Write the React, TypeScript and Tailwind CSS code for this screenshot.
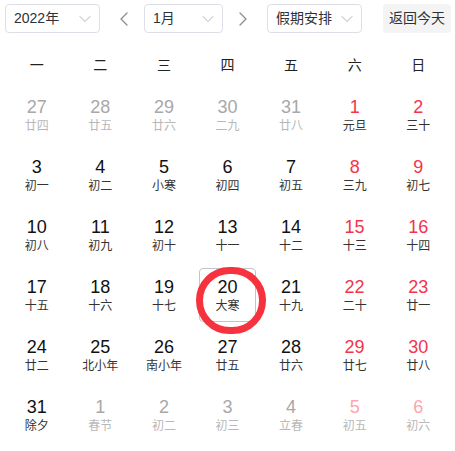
import { ChevronDown, ChevronLeft, ChevronRight } from "lucide-react";

type Day = {
  day: number;
  lunar: string;
  kind: "prev" | "cur" | "next";
};

const weekNames = ["一", "二", "三", "四", "五", "六", "日"];

const days: Day[] = [
  { day: 27, lunar: "廿四", kind: "prev" },
  { day: 28, lunar: "廿五", kind: "prev" },
  { day: 29, lunar: "廿六", kind: "prev" },
  { day: 30, lunar: "二九", kind: "prev" },
  { day: 31, lunar: "廿八", kind: "prev" },
  { day: 1, lunar: "元旦", kind: "cur" },
  { day: 2, lunar: "三十", kind: "cur" },
  { day: 3, lunar: "初一", kind: "cur" },
  { day: 4, lunar: "初二", kind: "cur" },
  { day: 5, lunar: "小寒", kind: "cur" },
  { day: 6, lunar: "初四", kind: "cur" },
  { day: 7, lunar: "初五", kind: "cur" },
  { day: 8, lunar: "三九", kind: "cur" },
  { day: 9, lunar: "初七", kind: "cur" },
  { day: 10, lunar: "初八", kind: "cur" },
  { day: 11, lunar: "初九", kind: "cur" },
  { day: 12, lunar: "初十", kind: "cur" },
  { day: 13, lunar: "十一", kind: "cur" },
  { day: 14, lunar: "十二", kind: "cur" },
  { day: 15, lunar: "十三", kind: "cur" },
  { day: 16, lunar: "十四", kind: "cur" },
  { day: 17, lunar: "十五", kind: "cur" },
  { day: 18, lunar: "十六", kind: "cur" },
  { day: 19, lunar: "十七", kind: "cur" },
  { day: 20, lunar: "大寒", kind: "cur" },
  { day: 21, lunar: "十九", kind: "cur" },
  { day: 22, lunar: "二十", kind: "cur" },
  { day: 23, lunar: "廿一", kind: "cur" },
  { day: 24, lunar: "廿二", kind: "cur" },
  { day: 25, lunar: "北小年", kind: "cur" },
  { day: 26, lunar: "南小年", kind: "cur" },
  { day: 27, lunar: "廿五", kind: "cur" },
  { day: 28, lunar: "廿六", kind: "cur" },
  { day: 29, lunar: "廿七", kind: "cur" },
  { day: 30, lunar: "廿八", kind: "cur" },
  { day: 31, lunar: "除夕", kind: "cur" },
  { day: 1, lunar: "春节", kind: "next" },
  { day: 2, lunar: "初二", kind: "next" },
  { day: 3, lunar: "初三", kind: "next" },
  { day: 4, lunar: "立春", kind: "next" },
  { day: 5, lunar: "初五", kind: "next" },
  { day: 6, lunar: "初六", kind: "next" },
];

function Select({ label, width }: { label: string; width: string }) {
  return (
    <div
      className={`flex h-[29px] items-center justify-between rounded-[4px] border border-[#dcdfe6] bg-white pl-[8px] pr-[4px] ${width}`}
    >
      <span className="text-[14px] text-[#303133]">{label}</span>
      <ChevronDown size={20} strokeWidth={1.1} className="text-[#a8abb2]" />
    </div>
  );
}

function DayCell({ d, index }: { d: Day; index: number }) {
  const weekend = index % 7 >= 5;
  const selected = d.kind === "cur" && d.day === 20;

  let numColor = "text-[#111]";
  let lunarColor = "text-[#333]";
  if (d.kind !== "cur") {
    numColor = weekend ? "text-[#ffa5ab]" : "text-[#a8a8a8]";
    lunarColor = "text-[#b8b8b8]";
  } else if (weekend) {
    numColor = "text-[#f5334a]";
  }

  return (
    <div className="h-[60px] px-[3px] py-[3px]">
      <div
        className={`flex h-full flex-col items-center justify-center rounded-[4px] border ${
          selected ? "border-[#c0c4cc]" : "border-transparent"
        }`}
      >
        <span className={`text-[18px] leading-[22px] ${numColor}`}>{d.day}</span>
        <span className={`text-[12px] leading-[16px] ${lunarColor}`}>{d.lunar}</span>
      </div>
    </div>
  );
}

export default function App() {
  return (
    <div
      className="relative h-[451px] w-[455px] overflow-hidden bg-white"
      style={{ fontFamily: '"Liberation Sans", "Noto Sans CJK SC", sans-serif' }}
    >
      <div className="flex items-center pl-[5px] pt-[4px]">
        <Select label="2022年" width="w-[95px]" />
        <div className="flex w-[44px] justify-center">
          <ChevronLeft size={24} strokeWidth={1.3} className="ml-[4px] text-[#8c8c8c]" />
        </div>
        <Select label="1月" width="w-[79px]" />
        <div className="flex w-[44px] justify-center">
          <ChevronRight size={24} strokeWidth={1.3} className="-ml-[4px] text-[#8c8c8c]" />
        </div>
        <Select label="假期安排" width="w-[95px]" />
        <button className="ml-[21px] h-[29px] w-[68px] rounded-[4px] bg-[#f4f4f5] text-[14px] text-[#303133]">
          返回今天
        </button>
      </div>

      <div className="mt-[12px] grid grid-cols-7 px-[5px]">
        {weekNames.map((w) => (
          <div key={w} className="flex h-[40px] items-center justify-center text-[14px] text-[#222]">
            {w}
          </div>
        ))}
        {days.map((d, i) => (
          <DayCell key={i} d={d} index={i} />
        ))}
      </div>

      {/* red annotation circle */}
      <div className="pointer-events-none absolute left-[196px] top-[267px] h-[67px] w-[70px] rounded-full border-[7px] border-[#f7323f]" />
    </div>
  );
}
